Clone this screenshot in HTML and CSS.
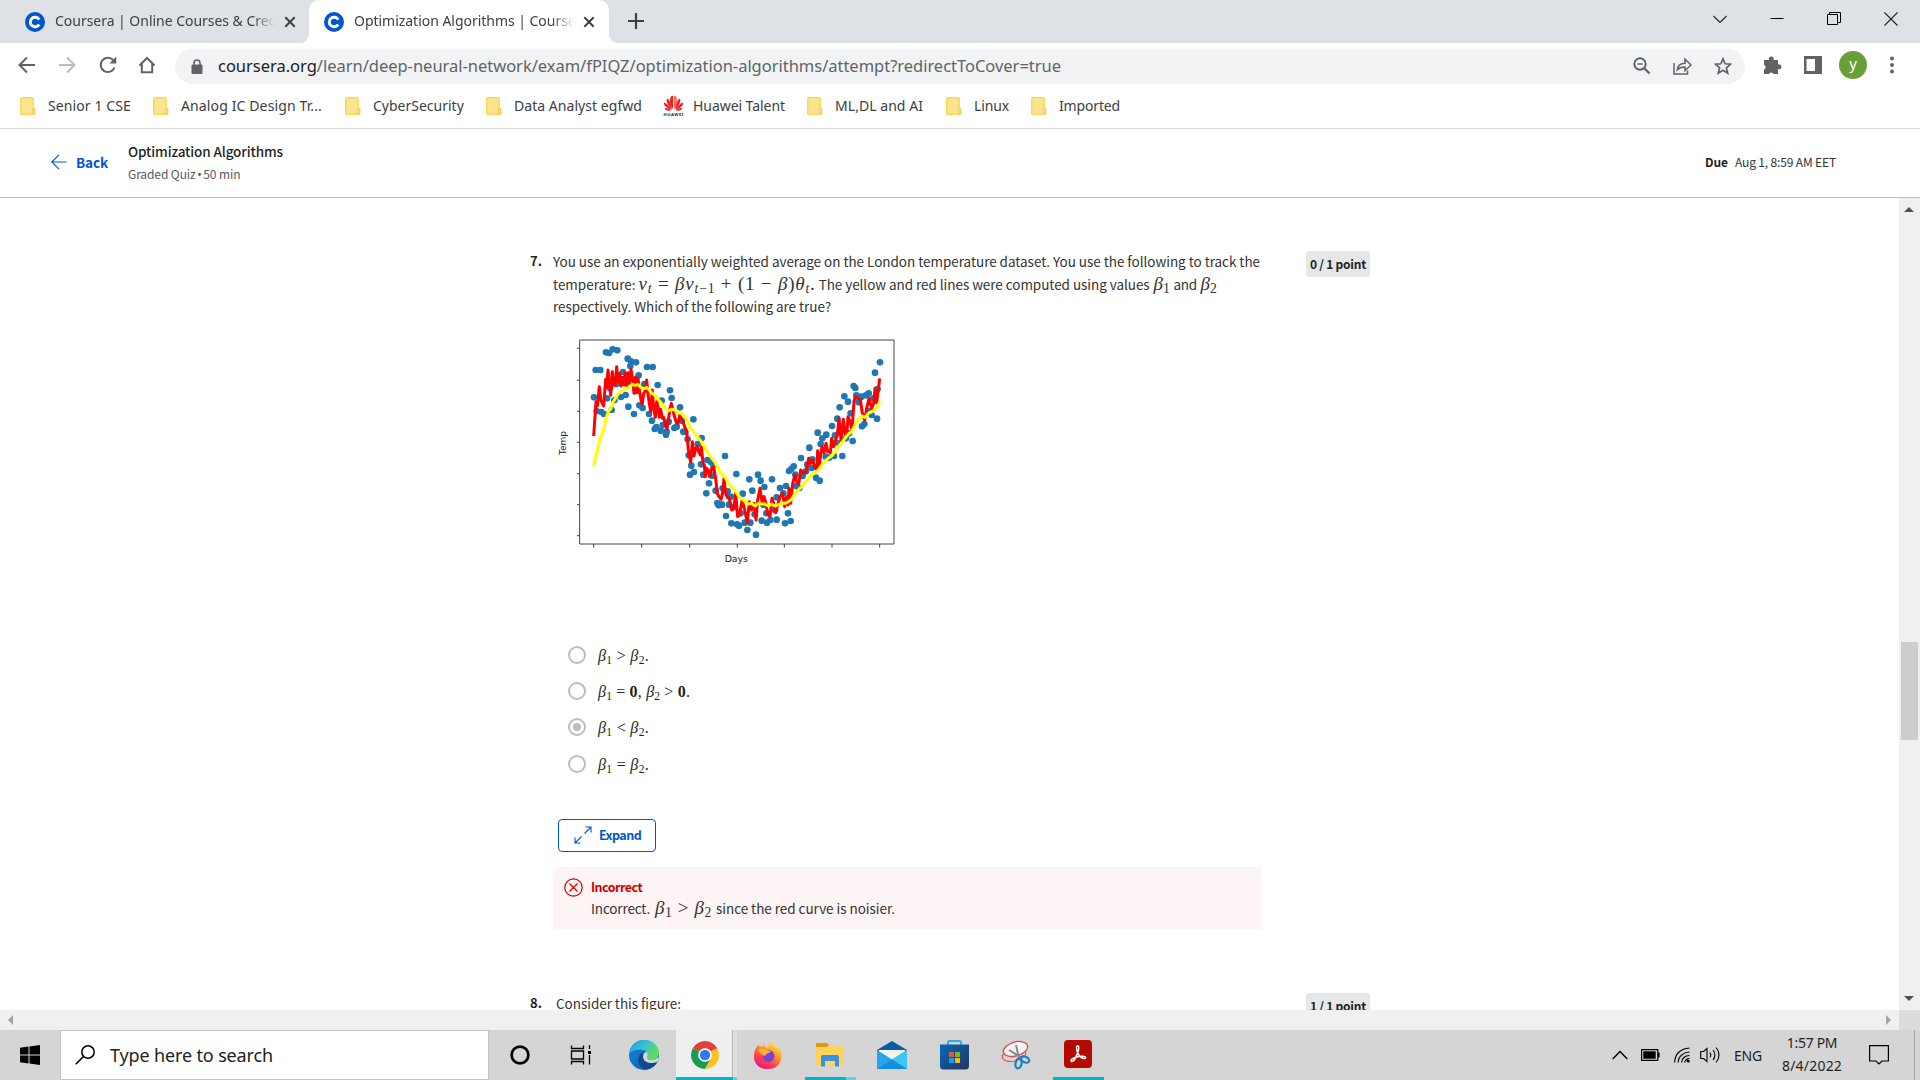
FILE: index.html
```html
<!DOCTYPE html>
<html lang="en">
<head>
<meta charset="utf-8">
<title>Optimization Algorithms | Coursera</title>
<link rel="stylesheet" href="styles.css">
</head>
<body>
<svg class="defs" width="0" height="0">
  <symbol id="folder" viewBox="0 0 16 18"><path d="M1.500 0h11a1.500 1.500 0 0 1 1.500 1.500V11h.5a1 1 0 0 1 1 1v4.500a1.500 1.500 0 0 1-1.500 1.500H1.500A1.500 1.500 0 0 1 0 16.500v-15A1.500 1.500 0 0 1 1.500 0z" fill="#fbd75b"/><path d="M1.500 1.500h11v15h-11z" fill="#ffe48f"/><path d="M12.500 16.500V13a1 1 0 0 1 2 0v3.500z" fill="#ffe79c" stroke="#eec04a" stroke-width=".7"/></symbol>
  <symbol id="coursera" viewBox="0 0 20 20"><circle cx="10" cy="10" r="10" fill="#0056d2"/><path d="M14.200 12.400a4.800 4.800 0 1 1 0-4.800" fill="none" stroke="#fff" stroke-width="2.900"/></symbol>
  <symbol id="close" viewBox="0 0 12 12"><path d="M1.300 1.300l9.400 9.400M10.700 1.300l-9.400 9.400" stroke="#3c4043" stroke-width="2" fill="none"/></symbol>
</svg>

<header class="tabs">
  <div class="tab tab-first"><svg class="fav"><use href="#coursera"/></svg><span class="tab-title"><span class="ui">Coursera | Online Courses &amp; Cred</span></span><svg class="x"><use href="#close"/></svg></div>
  <div class="tab tab-active"><svg class="fav"><use href="#coursera"/></svg><span class="tab-title"><span class="ui">Optimization Algorithms | Course</span></span><svg class="x"><use href="#close"/></svg></div>
  <svg class="plus" width="16" height="16" viewBox="0 0 16 16"><path d="M8 0v16M0 8h16" stroke="#3c4043" stroke-width="2.200"/></svg>
  <div class="window-buttons">
    <svg width="14" height="14" viewBox="0 0 14 14"><path d="M.5 4l6.500 6.500L13.500 4" fill="none" stroke="#222" stroke-width="1.100"/></svg>
    <svg width="14" height="14" viewBox="0 0 14 14"><path d="M.5 6.500h13" stroke="#000"/></svg>
    <svg width="14" height="14" viewBox="0 0 14 14"><path d="M.5 2.500h10v10H.5zM2.500 2.500v-2h11v10H11" fill="none" stroke="#000"/></svg>
    <svg width="14" height="14" viewBox="0 0 14 14"><path d="M.5.5l13 13M13.500.5L.5 13.500" stroke="#222" stroke-width="1.100"/></svg>
  </div>
</header>

<nav class="toolbar">
  <svg class="nav-icon back" viewBox="0 0 20 20"><path d="M18 10H3M10 2.500L2.500 10l7.500 7.500" fill="none" stroke="#5f6368" stroke-width="2"/></svg>
  <svg class="nav-icon fwd" viewBox="0 0 20 20"><path d="M2 10h15M10 2.500l7.500 7.500-7.500 7.500" fill="none" stroke="#babcbe" stroke-width="2"/></svg>
  <svg class="nav-icon reload" viewBox="0 0 20 20"><path d="M16.600 12.500A7.200 7.200 0 1 1 15.200 5" fill="none" stroke="#5f6368" stroke-width="2"/><path d="M18.300 1.500v7h-7z" fill="#5f6368"/></svg>
  <svg class="nav-icon home" viewBox="0 0 20 20"><path d="M2.500 10.500L10 3l7.500 7.500M4.800 9v8.300h10.400V9" fill="none" stroke="#5f6368" stroke-width="2"/></svg>
  <div class="omnibox">
    <svg class="lock" viewBox="0 0 12 15"><path d="M3 6V4a3 3 0 0 1 6 0v2" fill="none" stroke="#5f6368" stroke-width="1.600"/><rect x="0.500" y="5.500" width="11" height="9.500" rx="1.300" fill="#5f6368"/></svg>
    <span class="ui url"><b>coursera.org</b>/learn/deep-neural-network/exam/fPIQZ/optimization-algorithms/attempt?redirectToCover=true</span>
    <div class="omni-icons">
      <svg width="18" height="18" viewBox="0 0 18 18"><g fill="none" stroke="#5f6368"><circle cx="7" cy="7" r="5.700" stroke-width="1.900"/><path d="M11.500 11.500l5 5" stroke-width="2.300"/><path d="M4.300 7h5.400" stroke-width="1.400"/></g></svg>
      <svg width="19" height="18" viewBox="0 0 19 18"><path d="M1 6v11h13.500v-3.500M4.300 12.800c.4-4.300 3-6.500 7.700-6.600V2l6 6-6 5.500V10c-3.700-.1-6 .8-7.700 2.800z" fill="none" stroke="#5f6368" stroke-width="1.500"/></svg>
      <svg width="18" height="18" viewBox="0 0 18 18"><path d="M9 1.700l2.100 5.100 5.500.4-4.200 3.600 1.300 5.400L9 13.300l-4.700 2.900 1.300-5.400L1.400 7.200l5.500-.4z" fill="none" stroke="#5f6368" stroke-width="1.700"/></svg>
    </div>
  </div>
  <div class="actions">
    <svg class="puzzle" width="19" height="19" viewBox="0 0 19 19"><path d="M1 4h5a2.500 2.500 0 1 1 4.500 0H15v4.500a2.500 2.500 0 1 1 0 4.600V18h-4.500a2.500 2.500 0 0 0-4.600 0H1v-4.500a2.500 2.500 0 0 0 0-4.700z" fill="#5f6368"/></svg>
    <svg class="panel" width="18" height="18" viewBox="0 0 18 18"><path fill-rule="evenodd" d="M0 0h18v18H0zM2.500 3v12H11V3z" fill="#5f6368"/></svg>
    <span class="avatar">y</span>
    <svg class="menu" width="4" height="18" viewBox="0 0 4 18"><g fill="#5f6368"><circle cx="2" cy="2.500" r="2"/><circle cx="2" cy="9" r="2"/><circle cx="2" cy="15.500" r="2"/></g></svg>
  </div>
</nav>

<nav class="bookmarks">
  <div class="mark w1"><svg class="folder"><use href="#folder"/></svg><span class="ui m1">Senior 1 CSE</span></div>
  <div class="mark w2"><svg class="folder"><use href="#folder"/></svg><span class="ui m2">Analog IC Design Tr...</span></div>
  <div class="mark w3"><svg class="folder"><use href="#folder"/></svg><span class="ui">CyberSecurity</span></div>
  <div class="mark w4"><svg class="folder"><use href="#folder"/></svg><span class="ui m4">Data Analyst egfwd</span></div>
  <div class="mark w5"><svg class="huawei" viewBox="0 0 21 21"><g fill="#e8222e"><path d="M10 14C6.500 9 6 4 8.200 1.200 10 .3 10.200 1 10.300 3z"/><path d="M11 14c3.500-5 4-10 1.800-12.800C11 .3 10.800 1 10.700 3z" fill="#f4775c"/><path d="M9.300 14.300C5 11 3 7 3.800 3.800 5.500 3 7 6 9.300 14.300z"/><path d="M11.700 14.300C16 11 18 7 17.200 3.800 15.500 3 14 6 11.700 14.300z"/><path d="M8.800 14.700C4 13.500 1 11 .8 8c1.200-.8 4 1.500 8 6.700z"/><path d="M12.200 14.700c4.800-1.200 7.800-3.700 8-6.700-1.200-.8-4 1.500-8 6.700z"/><path d="M8.500 15.200c-3.500 1-6 .3-7-2 2-.5 4 .3 7 2z"/><path d="M12.500 15.200c3.500 1 6 .3 7-2-2-.5-4 .3-7 2z"/></g><text x="0.500" y="20.500" font-size="4.200" font-weight="700" textLength="20" fill="#222">HUAWEI</text></svg><span class="ui m5">Huawei Talent</span></div>
  <div class="mark w6"><svg class="folder"><use href="#folder"/></svg><span class="ui m6">ML,DL and AI</span></div>
  <div class="mark w7"><svg class="folder"><use href="#folder"/></svg><span class="ui m7">Linux</span></div>
  <div class="mark"><svg class="folder"><use href="#folder"/></svg><span class="ui m8">Imported</span></div>
</nav>

<section class="quiz-header">
  <svg class="back-arrow" width="16" height="16" viewBox="0 0 16 16"><path d="M15.500 8H1M8 .8L.8 8 8 15.200" fill="none" stroke="#0056d2" stroke-width="1.200"/></svg>
  <span class="back-text src">Back</span>
  <div class="quiz-name"><div><span class="src h1">Optimization Algorithms</span></div><div class="sub"><span class="src h2">Graded Quiz <span class="bullet">•</span> 50 min</span></div></div>
  <div class="due"><b class="src d1">Due</b><span class="src d2">Aug 1, 8:59 AM EET</span></div>
</section>

<div class="viewport">
<main class="page">
  <article class="question">
    <span class="num src">7.</span>
    <div class="body">
      <div class="prompt">
        <div class="line"><span class="src p1">You use an exponentially weighted average on the London temperature dataset. You use the following to track the</span></div>
        <div class="line"><span class="src p2">temperature:</span><span class="math q1"><i>v<sub>t</sub></i> = <i>βv<sub>t</sub></i><sub>−1</sub> + (1 − <i>β</i>)<i>θ<sub>t</sub></i>.</span><span class="src p3">The yellow and red lines were computed using values</span><span class="math q2"><i>β</i><sub>1</sub></span><span class="src p4">and</span><span class="math q2"><i>β</i><sub>2</sub></span></div>
        <div class="line"><span class="src p3">respectively. Which of the following are true?</span></div>
      </div>
      <svg class="chart" width="350" height="240" viewBox="0 0 1050 720">
        <g id="dots-left" fill="#1f77b4"></g><g id="dots-right" fill="#1f77b4" transform="translate(510 0)"></g>
        <g fill="none" stroke-width="9" stroke-linejoin="round">
          <path stroke="#f00" d="M131 318L138 215 142 228 148 170 153 212 161 228 167 148 170 172 174 120 178 160 182 196 187 125 192 166 196 165 200 110 204 155 209 130 213 168 217 142 222 165 226 128 230 168 235 128 238 160 243 118 248 152 252 190 256 142 260 188 264 145 269 185 274 215 277 222 281 190 285 185 290 150 295 200 302 245 307 180 311 235 316 262 320 215 324 230 328 262 332 238 337 265 341 262 346 285 351 296 356 265 360 235 364 220 368 238 373 258 379 278 384 280 389 256 394 265 399 275 404 290 410 305 415 360 422 397 427 335 432 378 437 355 442 350 446 365 451 375 454 350 459 398 463 405 466 440 470 415 474 420 479 440 485 415 491 412 497 445 502 490 508 503"/>
          <path stroke="#f00" transform="translate(510 0)" d="M-2 500L3 508 8 488 12 445 17 490 22 502 28 505 35 540 41 535 47 490 53 560 59 552 66 512 72 530 82 578 88 515 95 540 102 520 108 570 113 510 120 475 126 515 132 500 138 520 143 550 150 560 156 505 161 520 167 548 173 525 180 500 188 490 194 530 200 500 204 525 207 475 212 520 218 460 225 435 230 455 236 462 242 420 250 428 258 428 266 385 272 400 278 390 284 412 290 418 293 362 297 408 302 375 306 350 312 368 318 340 323 365 331 368 335 325 341 350 347 330 352 315 357 265 363 330 370 268 375 310 380 318 384 260 390 275 396 300 402 215 406 200 412 205 421 208 427 250 434 270 440 235 447 205 455 235 461 220 465 175 470 218 475 180 479 145"/>
          <path stroke="#ff0" d="M131 408L137 378 143 360 150 325 156 312 161 300 168 265 175 245 183 235 190 215 200 198 210 186 220 180 230 175 240 170 248 163 256 166 264 163 272 172 280 177 290 172 298 180 306 190 316 197 326 210 336 222 346 235 354 243 364 238 374 240 384 248 394 250 404 262 412 272 420 295 428 300 436 315 446 325 454 335 464 352 474 370 484 383 494 395 504 415 512 430"/>
          <path stroke="#ff0" transform="translate(510 0)" d="M0 426L8 435 16 443 25 460 35 473 45 482 55 497 65 505 75 515 85 522 95 520 105 528 115 520 125 522 135 522 145 528 155 522 165 528 175 524 185 520 195 520 205 515 215 508 225 490 235 480 245 470 255 458 265 445 275 435 285 428 295 420 305 405 315 393 325 385 335 378 345 365 355 350 365 338 375 325 385 312 395 305 405 285 415 268 425 258 435 262 445 250 455 245 465 240 475 225 479 215"/>
        </g>
        <path d="M89 30H1032V642H89zM89 55h-8M89 151h-8M89 244h-8M89 337h-8M89 431h-8M89 524h-8M89 617h-8M131 642v11M275 642v11M419 642v11M562 642v11M703 642v11M846 642v11M989 642v11" fill="none" stroke="#444" stroke-width="3"/>
        <text class="axis" transform="translate(48 375) rotate(-90)" textLength="72" lengthAdjust="spacingAndGlyphs">Temp</text>
        <text class="axis" x="524" y="697" textLength="70" lengthAdjust="spacingAndGlyphs">Days</text>
      </svg>
      <div class="options">
        <div class="option"><span class="radio"></span><span class="math o1"><i>β</i><sub>1</sub> &gt; <i>β</i><sub>2</sub>.</span></div>
        <div class="option"><span class="radio"></span><span class="math o2"><i>β</i><sub>1</sub> = <b>0</b>, <i>β</i><sub>2</sub> &gt; <b>0</b>.</span></div>
        <div class="option"><span class="radio checked"></span><span class="math o1"><i>β</i><sub>1</sub> &lt; <i>β</i><sub>2</sub>.</span></div>
        <div class="option"><span class="radio"></span><span class="math o1"><i>β</i><sub>1</sub> = <i>β</i><sub>2</sub>.</span></div>
      </div>
      <button class="expand"><svg width="18" height="18" viewBox="0 0 18 18"><path d="M10.500 7.500L17 1M11.500 1H17v5.500M7.500 10.500L1 17M1 11.500V17h5.500" fill="none" stroke="#0056d2" stroke-width="1.100"/></svg><span class="src">Expand</span></button>
      <div class="feedback">
        <svg width="19" height="19" viewBox="0 0 19 19"><g fill="none" stroke="#d30001" stroke-width="1.200"><circle cx="9.500" cy="9.500" r="8.700"/><path d="M5.500 5.500l8 8M13.500 5.500l-8 8"/></g></svg>
        <div class="feedback-text"><div class="wrong"><span class="src">Incorrect</span></div><div class="why"><span class="src f2">Incorrect.</span><span class="math q4"><i>β</i><sub>1</sub> &gt; <i>β</i><sub>2</sub></span><span class="src f3">since the red curve is noisier.</span></div></div>
      </div>
    </div>
    <span class="points"><span class="src">0 / 1 point</span></span>
  </article>
  <article class="question next">
    <span class="num src">8.</span>
    <div class="body"><div class="prompt consider"><span class="src p1">Consider this figure:</span></div></div>
    <span class="points"><span class="src">1 / 1 point</span></span>
  </article>
</main>
<div class="vbar"><i class="up"></i><i class="thumb"></i><i class="down"></i></div>
</div>
<div class="hbar"><i class="left"></i><i class="right"></i><i class="corner"></i></div>

<footer class="taskbar">
  <div class="start"><svg width="20" height="20" viewBox="0 0 20 20"><path d="M0 2.800l8.500-1.200v7.900H0zM9.500 1.400L20 0v9.500H9.500zM0 10.500h8.500v7.900L0 17.200zM9.500 10.500H20V20L9.500 18.600z"/></svg></div>
  <div class="search"><svg width="20" height="20" viewBox="0 0 20 20"><g fill="none" stroke="#000" stroke-width="1.500"><circle cx="13" cy="7" r="6.200"/><path d="M8.600 11.400L.7 19.300"/></g></svg><span class="ui s1">Type here to search</span></div>
  <div class="app"><svg width="20" height="20" viewBox="0 0 20 20"><circle cx="10" cy="10" r="8.400" fill="none" stroke="#000" stroke-width="2.700"/></svg></div>
  <div class="app taskview"><svg width="22" height="20" viewBox="0 0 22 20"><path d="M1.500.5v3h12v-3M1.500 19.500v-3h12v3M1.500 6h12v8h-12zM19.500 0v4M19.500 10v9.500" fill="none" stroke="#000" stroke-width="1.300"/><path d="M18 6h3v3h-3z"/></svg></div>
  <div class="app"><svg width="30" height="30" viewBox="0 0 30 30"><defs><linearGradient id="ea" x1="0" y1="0" x2="1" y2=".5"><stop offset="0" stop-color="#1b9de2"/><stop offset=".5" stop-color="#35c1d8"/><stop offset="1" stop-color="#63dd55"/></linearGradient><linearGradient id="eb" x1="0" y1="0" x2=".6" y2="1"><stop offset="0" stop-color="#1485d8"/><stop offset="1" stop-color="#0868bd"/></linearGradient></defs><circle cx="15" cy="15" r="15" fill="url(#eb)"/><path d="M0 14C1 5 7 0 15 0c9 0 15 6 15 12.500 0 5-4 7.500-7.500 7.500-3 0-5-1.500-4-3.500C20 13 17 9.500 11 9.500 6 9.500 2 11 0 14z" fill="url(#ea)"/><path d="M14.500 12c-8 3-7 16 3 17.800C22 29 26.500 26 28.200 22.300c-6 2.500-14.200.7-14.200-6.300 0-2 1-3.500 2.500-4z" fill="#114a8b"/><path d="M17 11.700c2 1 2.300 3 1.500 4.800-1 2 1 3.500 4 3.500 2.300 0 4.300-.8 5.700-2.300L30 17.500l-1.500 4c-5 3-14.500 1.500-14.500-5 0-2 1.200-4.300 3-4.800z" fill="#d5d5d5"/></svg></div>
  <div class="app chrome"><svg width="28" height="28" viewBox="0 0 28 28"><path d="M14 14L1.900 7A14 14 0 0 1 26.100 7z" fill="#db4437"/><path d="M14 14L1.900 7a14 14 0 0 0 12.100 21l6-10.500z" fill="#1e9a50"/><path d="M14 14L26.100 7A14 14 0 0 1 14 28l6-10.500z" fill="#fcc31c"/><path d="M14 7.500h12.400l-.3-.5zM2 7l6.400 11z" fill="#db4437"/><circle cx="14" cy="14" r="6.800" fill="#fff"/><circle cx="14" cy="14" r="5.200" fill="#2f7bed"/></svg></div>
  <div class="app"><svg width="28" height="28" viewBox="0 0 28 28"><defs><linearGradient id="fx" x1=".8" y1="0" x2=".2" y2="1"><stop offset="0" stop-color="#fff44f"/><stop offset=".35" stop-color="#ffa02c"/><stop offset=".7" stop-color="#ff3d52"/><stop offset="1" stop-color="#e31587"/></linearGradient></defs><path d="M2 7l2.500-3L6 5l3 .5V3l4 4 2-2V0c5 1.500 6 5 8 7 1.500 0 2-1 2-1 5 8 3 22-11 22C-1 28-2 15 2 7z" fill="url(#fx)"/><circle cx="14.500" cy="15" r="6" fill="#7743d8"/><path d="M4 9c3-3 6-1 8 0l5 1c-2 3-5 2-6 5-2 0-4-2-7-6z" fill="#ffb02c"/></svg></div>
  <div class="app explorer"><svg width="28" height="24" viewBox="0 0 28 24"><path d="M0 1a1 1 0 0 1 1-1h10l2.500 2.500L11 6H0z" fill="#dd9b08"/><path d="M0 4h11l2-2h13.500A1.500 1.500 0 0 1 28 3.500V22H0z" fill="#ffd35c"/><path d="M5 23.500V14a2 2 0 0 1 2-2h14a2 2 0 0 1 2 2v9.500h-4V18H9v5.500z" fill="#3a91dd"/></svg></div>
  <div class="app"><svg width="30" height="28" viewBox="0 0 30 28"><path d="M0 9L15 0l15 9v4H0z" fill="#0a5ba8"/><path d="M2 9h26v9H2z" fill="#f3f3f3"/><path d="M0 9l15 9.500L30 9v19H0z" fill="#25a5ea"/><path d="M30 9v19L15 18.500z" fill="#3cc8f6"/><path d="M0 28l15-9.500L30 28z" fill="#168ddc"/></svg></div>
  <div class="app"><svg width="29" height="30" viewBox="0 0 29 30"><defs><linearGradient id="st" x1="0" y1="0" x2="1" y2="1"><stop offset="0" stop-color="#0669bd"/><stop offset="1" stop-color="#25345f"/></linearGradient></defs><path d="M8 7V2.500A1.500 1.500 0 0 1 9.500 1h10A1.500 1.500 0 0 1 21 2.500V7" fill="none" stroke="#25b3ee" stroke-width="2"/><path d="M0 4.500h29V26a3.500 3.500 0 0 1-3.500 3.500h-22A3.500 3.500 0 0 1 0 26z" fill="url(#st)"/><path d="M9 12h5v5H9z" fill="#f35325"/><path d="M15 12h5v5h-5z" fill="#81bc06"/><path d="M9 18h5v5H9z" fill="#05a6f0"/><path d="M15 18h5v5h-5z" fill="#ffba08"/></svg></div>
  <div class="app"><svg width="30" height="30" viewBox="0 0 30 30"><g fill="#f4f4f4" stroke="#e0474c"><ellipse cx="13" cy="15" rx="12" ry="6" transform="rotate(-12 13 15)" fill="none"/><ellipse cx="14.500" cy="9" rx="12.500" ry="7" transform="rotate(-16 14.500 9)" stroke-width="1.300"/></g><path d="M15 5l3 13M8 10l13 8" stroke="#858b90" stroke-width="2"/><g fill="none" stroke="#1680c4" stroke-width="2.200"><ellipse cx="17.500" cy="23.500" rx="3" ry="5" transform="rotate(10 17.500 23.500)"/><ellipse cx="24" cy="19.500" rx="4.500" ry="2.800" transform="rotate(25 24 19.500)"/></g></svg></div>
  <div class="app acrobat"><svg width="28" height="28" viewBox="0 0 28 28"><rect width="28" height="28" rx="4" fill="#b30b00"/><path d="M13.300 6c1.700-.6 1.800 2 .9 5-1 3.500-3.700 9.500-5.700 10.300-2 .6-2.300-1.700.3-3 3.200-1.700 9.700-2.800 12-1.700 1.800 1 .3 2.600-2 1.700-3-1.200-5-5-5.700-7.300-.7-2.500-.8-4.700.2-5z" fill="none" stroke="#fff" stroke-width="1.500"/></svg></div>
  <div class="tray">
    <svg width="16" height="10" viewBox="0 0 16 10"><path d="M.7 9L8 1.500 15.300 9" fill="none" stroke="#000" stroke-width="1.400"/></svg>
    <svg class="bat" width="19" height="12" viewBox="0 0 19 12"><path d="M.6.6h16.200v10.800H.6zM18 3.500v5" fill="none" stroke="#000" stroke-width="1.200"/><path d="M2.300 2.300h12.400v7.400H2.300z"/></svg>
    <svg class="wifi" width="16" height="16" viewBox="0 0 16 16"><g fill="none" stroke="#000" stroke-width="1.200"><path d="M.7 15.500C.7 7 6.500 1.500 15.500 1"/><path d="M4.200 15.500c0-6 5-10.300 11.300-10.500"/><path d="M7.600 15.500c0-4 3.400-7 7.900-7"/><path d="M10.800 15.500c0-2.200 2-4 4.700-4"/></g><circle cx="14.200" cy="14" r="1.600"/></svg>
    <svg class="vol" width="20" height="18" viewBox="0 0 20 18"><path d="M.7 5.500h2.800l3.500-3v13l-3.500-3H.7zM10 6.500c1 1.500 1 3.500 0 5M13 4c2.300 3 2.300 7 0 10M16 1.500c4 4.500 4 10.500 0 15" fill="none" stroke="#000" stroke-width="1.100"/></svg>
    <span class="ui eng">ENG</span>
    <div class="clock"><span class="ui c1">1:57 PM</span><span class="ui c2">8/4/2022</span></div>
    <svg class="note" width="20" height="20" viewBox="0 0 20 20"><path d="M.6.600h18.800v15.400h-6.400l-3 3-3-3H.6z" fill="none" stroke="#000" stroke-width="1.200"/></svg>
    <span class="peek"></span>
  </div>
</footer>
<script src="chart.js"></script>
</body>
</html>
```
FILE: chart.js
```js
// Daily temperature samples, as "x,y" pairs in chart units, for each half of the year.
const firstHalf = "132,202 137,120 151,120 168,67 177,69 188,58 202,61 140,243 154,246 162,252 171,205 185,240 193,211 213,201 219,126 233,86 243,94 241,108 258,97 266,136 227,195 235,230 252,252 268,226 278,234 283,162 291,111 308,111 323,165 335,212 297,252 306,272 314,297 319,291 332,302 348,314 338,285 350,305 360,181 365,204 356,275 373,294 380,290 390,232 396,272 400,305 406,306 413,328 416,376 424,407 420,434 432,426 430,268 443,342 455,324 453,403 460,434 472,390 482,395 490,405 469,490 477,460 487,437 497,482 502,519 506,526 516,524 518,475 200,162 180,175 262,182 225,150";
const secondHalf = "15,378 49,432 5,524 27,524 18,558 34,580 51,583 57,587 74,578 91,578 82,600 108,614 23,484 32,500 68,491 97,482 88,448 114,434 122,452 133,471 156,448 104,553 125,572 139,550 141,578 151,570 170,569 195,580 212,573 204,550 180,474 170,502 190,490 198,468 40,532 62,550 130,524 165,540 207,423 214,417 221,409 226,434 228,468 238,474 243,384 248,438 262,404 277,388 268,353 258,424 275,414 288,443 299,452 293,308 302,342 307,325 319,314 317,380 327,383 342,378 336,288 345,316 352,266 359,232 373,199 384,215 367,378 356,340 378,325 387,310 398,333 392,250 401,168 406,174 409,196 416,217 424,200 438,196 446,190 426,289 433,282 455,255 471,266 465,128 480,97 473,177 460,205 447,243";

function drawDots(groupId, list) {
  const group = document.getElementById(groupId);
  for (const point of list.split(" ")) {
    const [x, y] = point.split(",");
    const dot = document.createElementNS("http://www.w3.org/2000/svg", "circle");
    dot.setAttribute("cx", x);
    dot.setAttribute("cy", y);
    dot.setAttribute("r", 10);
    group.append(dot);
  }
}

drawDots("dots-left", firstHalf);
drawDots("dots-right", secondHalf);
```
FILE: styles.css
```css
* { box-sizing: border-box; }
body { margin: 0; width: 1920px; height: 1080px; overflow: hidden; background: #fff; color: #1f1f1f; display: flex; flex-direction: column; font-family: "Noto Sans", sans-serif; }
svg { display: block; flex: none; }
.defs { position: absolute; }
.ui { font-family: "Noto Sans", sans-serif; white-space: nowrap; display: inline-block; flex: none; }
.src { font-family: "Noto Sans CJK SC", sans-serif; white-space: nowrap; display: inline-block; flex: none; }
.math { font-family: "Liberation Serif", serif; white-space: nowrap; display: inline-block; flex: none; }
.math sub { font-size: 0.72em; line-height: 0; vertical-align: -0.22em; }

.tabs { height: 43px; background: #dee1e6; display: flex; align-items: flex-start; flex: none; }
.tab { height: 43px; display: flex; align-items: center; flex: none; position: relative; }
.tab-first { width: 309px; padding-left: 25px; }
.tab-active { width: 300px; padding-left: 15px; background: #fff; border-radius: 10px 10px 0 0; }
.tab-active::before, .tab-active::after { content: ""; position: absolute; bottom: 0; width: 10px; height: 10px; }
.tab-active::before { left: -10px; background: radial-gradient(circle at 0 0, #dee1e6 10px, #fff 10.500px); }
.tab-active::after { right: -10px; background: radial-gradient(circle at 100% 0, #dee1e6 10px, #fff 10.500px); }
.fav { width: 20px; height: 20px; margin-right: 10px; }
.tab-title { width: 220px; overflow: hidden; font-size: 14px; letter-spacing: -0.03px; color: #3c4043; -webkit-mask-image: linear-gradient(90deg, #000 90%, transparent); mask-image: linear-gradient(90deg, #000 90%, transparent); line-height: 24px; height: 25px; }
.x { width: 12px; height: 12px; margin-left: 9px; }
.plus { margin: 13px 0 0 19px; }
.window-buttons { display: flex; gap: 43px; margin: 12px 22px 0 auto; }

.toolbar { height: 42px; display: flex; align-items: center; flex: none; padding: 3px 0 0; }
.nav-icon { width: 20px; height: 20px; margin-top: -1px; }
.back { margin-left: 17px; }
.fwd { margin-left: 20px; }
.reload { margin-left: 21px; }
.home { margin-left: 19px; }
.omnibox { width: 1570px; height: 35px; flex: none; border-radius: 18px; background: #f1f3f4; margin-left: 18px; margin-top: 1px; display: flex; align-items: center; padding-left: 16px; }
.lock { width: 12px; height: 15px; margin-right: 15px; }
.url { font-size: 16.500px; line-height: 30px; letter-spacing: -0.02px; color: #5f6368; }
.url b { font-weight: 400; color: #202124; }
.omni-icons { margin-left: auto; margin-right: 13px; display: flex; gap: 22px; }
.actions { display: flex; align-items: center; margin: -1px 0 0 18px; }
.panel { margin-left: 22px; }
.avatar { width: 28px; height: 28px; margin: 0 23px 0 17px; border-radius: 50%; background: #689f38; color: #fff; text-align: center; font: 15px/25px "Noto Sans", sans-serif; }

.bookmarks { height: 44px; border-bottom: 1px solid #dadce0; display: flex; align-items: center; flex: none; padding: 0 0 2px 20px; font-size: 14px; color: #3c4043; line-height: 24px; }
.mark { display: flex; align-items: center; flex: none; }
.folder { width: 16px; height: 18px; margin-right: 12px; }
.huawei { width: 21px; height: 21px; margin-right: 9px; }
.w1 { width: 133px; } .w2 { width: 192px; } .w3 { width: 141px; } .w4 { width: 177px; } .w5 { width: 144px; } .w6 { width: 139px; } .w7 { width: 85px; }
.m1 { letter-spacing: 0.107px; } .m2 { letter-spacing: 0.125px; } .m4, .m6 { letter-spacing: 0.046px; } .m5 { letter-spacing: -0.059px; } .m7, .m8 { letter-spacing: -0.15px; }

.quiz-header { height: 69px; border-bottom: 1px solid #bbb; display: flex; align-items: center; padding: 0 84px 2px 51px; flex: none; }
.back-text { margin-left: 9px; color: #0056d2; font-weight: 700; font-size: 13.500px; letter-spacing: -0.12px; }
.quiz-name { margin: 2px 0 0 20px; line-height: 21px; font-size: 13.500px; }
.h1 { font-weight: 500; letter-spacing: -0.12px; color: #1f1f1f; }
.sub { font-size: 12px; color: #5a5a5a; }
.h2 { letter-spacing: -0.1px; }
.bullet { font-family: "Noto Sans", sans-serif; margin: 0 -1px; }
.due { margin-left: auto; display: flex; font-size: 12px; line-height: 20px; }
.d1 { margin-right: 7px; letter-spacing: -0.1px; }
.d2 { letter-spacing: -0.15px; color: #333; }

.viewport { height: 812px; display: flex; overflow: hidden; flex: none; }
.page { flex: 1; padding-left: 530px; }
.question { display: flex; align-items: flex-start; height: 742px; padding-top: 53px; }
.num { width: 23px; margin-top: -1px; font-weight: 700; font-size: 13px; line-height: 22px; }
.body { width: 709px; font-size: 13.500px; }
.prompt { color: #333; line-height: 22.500px; height: 68px; margin-top: -1px; }
.consider { padding-left: 3px; }
.line { display: flex; height: 22.500px; }
.prompt .math { font-size: 19px; }
.p1 { letter-spacing: -0.035px; }
.p2 { margin-right: 3px; }
.p3 { letter-spacing: -0.047px; }
.q1 { letter-spacing: 0.796px; margin-right: 3px; }
.q2 { letter-spacing: -0.156px; margin: 0 4px; }
.p4 { letter-spacing: -0.4px; }
.chart { margin: 12px 0 0 -3px; }
.axis { font-family: "DejaVu Sans", sans-serif; font-size: 28px; fill: #222; }
.options { padding: 67px 0 0 15px; }
.option { display: flex; align-items: center; height: 36.200px; font-size: 16px; }
.option .math { padding-top: 2px; }
.o1 { letter-spacing: 0.313px; }
.o2 { letter-spacing: 0.165px; }
.radio { width: 18px; height: 18px; border: 2px solid #bdbdbd; border-radius: 50%; margin-right: 12px; display: grid; place-items: center; }
.checked::after { content: ""; width: 8px; height: 8px; border-radius: 50%; background: #bdbdbd; }
.expand { display: flex; align-items: center; width: 98px; height: 33px; margin: 37px 0 15px 5px; padding: 0 0 2px 15px; background: #fff; border: 1px solid #0056d2; border-radius: 4px; color: #0056d2; font-weight: 700; font-size: 12.500px; letter-spacing: -0.55px; }
.expand svg { margin: 2px 7px 0 0; }
.feedback { height: 63px; background: #fdf4f5; display: flex; padding: 11px 0 0 11px; }
.feedback-text { margin: -1px 0 0 8px; line-height: 20px; color: #333; }
.wrong { color: #d30001; font-weight: 700; font-size: 12.500px; letter-spacing: -0.52px; }
.why { display: flex; height: 20px; }
.why .math { font-size: 19px; }
.f2 { letter-spacing: -0.142px; margin-right: 5px; }
.q4 { letter-spacing: 0.594px; margin-right: 4px; }
.f3 { letter-spacing: -0.036px; }
.points { margin-left: 44px; width: 64px; height: 26px; border-radius: 3px; background: #e5e7e8; font-weight: 700; font-size: 12px; letter-spacing: -0.237px; line-height: 25px; text-align: center; }

.vbar { width: 21px; background: #f0f0f0; position: relative; }
.vbar i, .hbar i { position: absolute; }
.up { left: 5px; top: 9px; border: 5px solid transparent; border-top: 0; border-bottom-color: #505050; }
.down { left: 5px; bottom: 9px; border: 5px solid transparent; border-bottom: 0; border-top-color: #505050; }
.thumb { left: 2px; top: 444px; width: 17px; height: 98px; background: #cdcdcd; }
.hbar { height: 20px; background: #f0f0f0; position: relative; flex: none; }
.left { left: 8px; top: 5px; border: 5px solid transparent; border-left: 0; border-right-color: #a3a3a3; }
.right { left: 1886px; top: 5px; border: 5px solid transparent; border-right: 0; border-left-color: #a3a3a3; }
.corner { right: 0; top: 0; width: 21px; height: 20px; background: #dcdcdc; }

.taskbar { height: 50px; background: #d5d5d5; display: flex; flex: none; }
.start { width: 60px; display: grid; place-items: center; }
.search { width: 429px; height: 50px; background: #fff; border: 1px solid #c3c3c3; display: flex; align-items: center; gap: 15px; padding-left: 14px; font-size: 18px; color: #222; }
.s1 { letter-spacing: -0.142px; }
.app { width: 62px; display: grid; place-items: center; flex: none; }
.taskview { padding-right: 3px; }
.chrome { padding-right: 2px; background: linear-gradient(90deg, #00b7c3 57px, #66d3da 57px) 1px 100% / 61px 3px no-repeat, linear-gradient(90deg, transparent 1px, #efefef 1px 57px, #b5b5b5 57px 58px, #e0e0e0 58px); }
.explorer { background: linear-gradient(90deg, #00b7c3 41px, #66d3da 41px) 6px 100% / 51px 3px no-repeat; }
.acrobat { padding-bottom: 2px; background: linear-gradient(#00b7c3, #00b7c3) 6px 100% / 51px 3px no-repeat; }
.tray { margin-left: auto; display: flex; align-items: center; width: 308px; font-size: 14px; }
.bat { margin-left: 13px; }
.wifi { margin-left: 14px; }
.vol { margin-left: 10px; }
.eng { margin-left: 14px; letter-spacing: -0.2px; }
.clock { width: 62px; margin-left: 19px; display: flex; flex-direction: column; align-items: center; line-height: 22.500px; padding-bottom: 1px; }
.c1 { letter-spacing: -0.3px; }
.c2 { letter-spacing: 0.2px; }
.note { margin-left: 26px; }
.peek { width: 1px; height: 50px; background: #a5a5a5; margin-left: 25px; }
```
